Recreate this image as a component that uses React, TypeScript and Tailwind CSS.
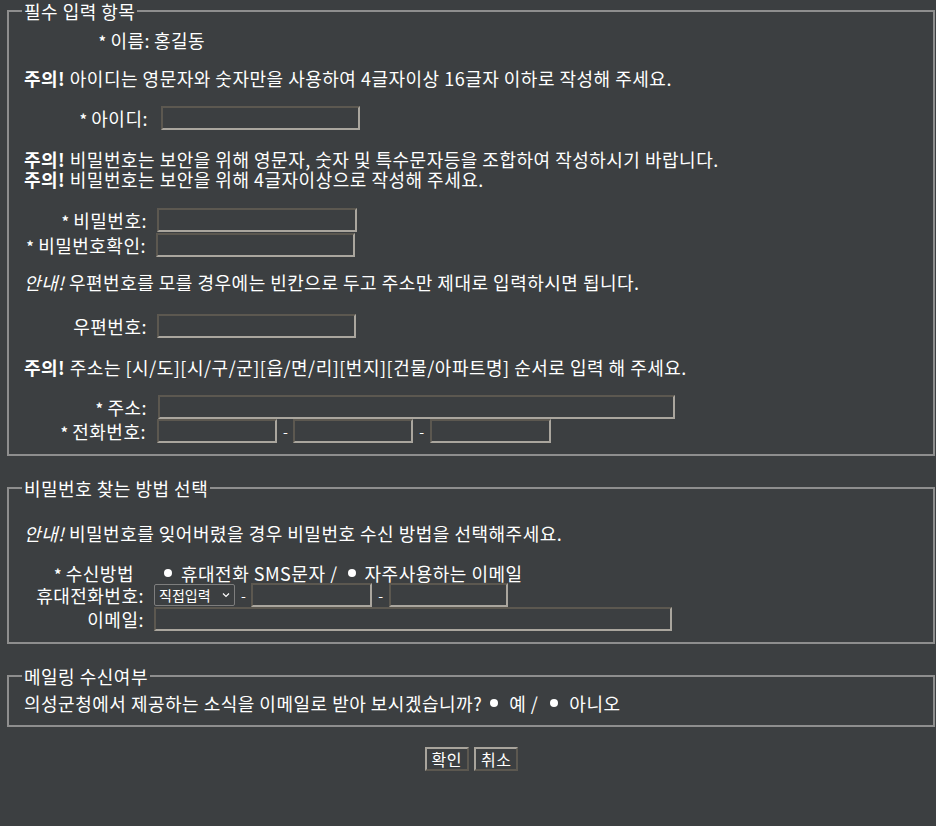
import type { ReactNode } from 'react'

const inset =
  'h-[24px] bg-transparent border-2 border-t-[#5c5850] border-l-[#5c5850] border-b-[#aaa69e] border-r-[#aaa69e] outline-none'

const outset =
  'h-[24px] px-[5px] text-[16px] leading-[18px] border-2 border-t-[#a8a49c] border-l-[#a8a49c] border-b-[#5c5850] border-r-[#5c5850]'

function Field({ legend, children, className = '' }: { legend: string; children: ReactNode; className?: string }) {
  return (
    <fieldset className={`ml-[7px] w-[928px] border-2 border-[#8e8e8e] pl-[13px] pr-[13px] ${className}`}>
      <legend className="px-[2px] leading-[20px]">{legend}</legend>
      <div className="pl-[2px]">{children}</div>
    </fieldset>
  )
}

function Dot() {
  return <span className="inline-block w-[8px] h-[8px] rounded-full bg-white" />
}

function Star() {
  return <span className="text-[14px] font-bold align-[1px] mr-[4px]">*</span>
}

export default function App() {
  return (
    <div
      className="min-h-[826px] bg-[#3c3f41] text-white text-[18px] tracking-[0.5px] leading-[20px] pt-[1px]"
      style={{ fontFamily: '"Noto Sans CJK KR", "Noto Sans", sans-serif' }}
    >
      <Field legend="필수 입력 항목" className="pb-[11px]">
        <div className="mt-[9px] flex items-center h-[20px]">
          <span className="w-[126px] text-right"><Star />이름:</span>
          <span className="ml-[4px]">홍길동</span>
        </div>

        <p className="mt-[18px]">
          <b>주의!</b> 아이디는 영문자와 숫자만을 사용하여 4글자이상 16글자 이하로 작성해 주세요.
        </p>

        <div className="mt-[18px] flex items-center">
          <span className="w-[124px] text-right"><Star />아이디:</span>
          <input className={`${inset} ml-[13px] w-[199px]`} />
        </div>

        <p className="mt-[19px]">
          <b>주의!</b> 비밀번호는 보안을 위해 영문자, 숫자 및 특수문자등을 조합하여 작성하시기 바랍니다.
          <br />
          <b>주의!</b> 비밀번호는 보안을 위해 4글자이상으로 작성해 주세요.
        </p>

        <div className="mt-[19px] flex items-center">
          <span className="w-[123px] text-right"><Star />비밀번호:</span>
          <input type="password" className={`${inset} ml-[10px] w-[200px]`} />
        </div>
        <div className="mt-[1px] flex items-center">
          <span className="w-[122px] text-right"><Star />비밀번호확인:</span>
          <input type="password" className={`${inset} ml-[10px] w-[199px]`} />
        </div>

        <p className="mt-[15px]">
          <i>안내!</i> 우편번호를 모를 경우에는 빈칸으로 두고 주소만 제대로 입력하시면 됩니다.
        </p>

        <div className="mt-[22px] flex items-center">
          <span className="w-[123px] text-right">우편번호:</span>
          <input className={`${inset} ml-[10px] w-[199px]`} />
        </div>

        <p className="mt-[19px]">
          <b>주의!</b> 주소는 [시/도][시/구/군][읍/면/리][번지][건물/아파트명] 순서로 입력 해 주세요.
        </p>

        <div className="mt-[18px] flex items-center">
          <span className="w-[123px] text-right"><Star />주소:</span>
          <input className={`${inset} ml-[11px] w-[517px]`} />
        </div>
        <div className="flex items-center">
          <span className="w-[122px] text-right"><Star />전화번호:</span>
          <input className={`${inset} ml-[11px] w-[120px]`} />
          <span className="ml-[6px] mr-[5px] text-[14px]">-</span>
          <input className={`${inset} w-[120px]`} />
          <span className="ml-[6px] mr-[5px] text-[14px]">-</span>
          <input className={`${inset} w-[121px]`} />
        </div>
      </Field>

      <Field legend="비밀번호 찾는 방법 선택" className="mt-[22px] pb-[11px]">
        <p className="mt-[25px]">
          <i>안내!</i> 비밀번호를 잊어버렸을 경우 비밀번호 수신 방법을 선택해주세요.
        </p>

        <div className="mt-[20px] flex items-center h-[20px]">
          <span className="w-[110px] text-right"><Star />수신방법</span>
          <span className="ml-[30px] flex items-center gap-[9px]">
            <Dot />
            <span>휴대전화 SMS문자 /</span>
          </span>
          <span className="ml-[10px] flex items-center gap-[9px]">
            <Dot />
            <span>자주사용하는 이메일</span>
          </span>
        </div>

        <div className="flex items-center">
          <span className="w-[120px] text-right">휴대전화번호:</span>
          <div className="ml-[10px] w-[81px] h-[22px] flex items-center justify-between border border-[#7e7e7e] rounded-[2px] pl-[4px] pr-[4px] text-[14px] tracking-normal">
            <span>직접입력</span>
            <svg width="8" height="6" viewBox="0 0 8 6" fill="none" stroke="currentColor" strokeWidth="1.2">
              <path d="M1 1.5l3 3 3-3" />
            </svg>
          </div>
          <span className="ml-[6px] mr-[5px] text-[14px]">-</span>
          <input className={`${inset} w-[121px]`} />
          <span className="ml-[6px] mr-[5px] text-[14px]">-</span>
          <input className={`${inset} w-[119px]`} />
        </div>

        <div className="flex items-center">
          <span className="w-[120px] text-right">이메일:</span>
          <input className={`${inset} ml-[10px] w-[518px]`} />
        </div>
      </Field>

      <Field legend="메일링 수신여부" className="mt-[22px] pb-[12px]">
        <div className="mt-[7px] flex items-center h-[20px]">
          <span>의성군청에서 제공하는 소식을 이메일로 받아 보시겠습니까?</span>
          <span className="ml-[8px] flex items-center gap-[11px]">
            <Dot />
            <span>예 /</span>
          </span>
          <span className="ml-[12px] flex items-center gap-[11px]">
            <Dot />
            <span>아니오</span>
          </span>
        </div>
      </Field>

      <div className="mt-[20px] flex justify-center gap-[5px] pl-[7px]">
        <button className={outset}>확인</button>
        <button className={outset}>취소</button>
      </div>
    </div>
  )
}
